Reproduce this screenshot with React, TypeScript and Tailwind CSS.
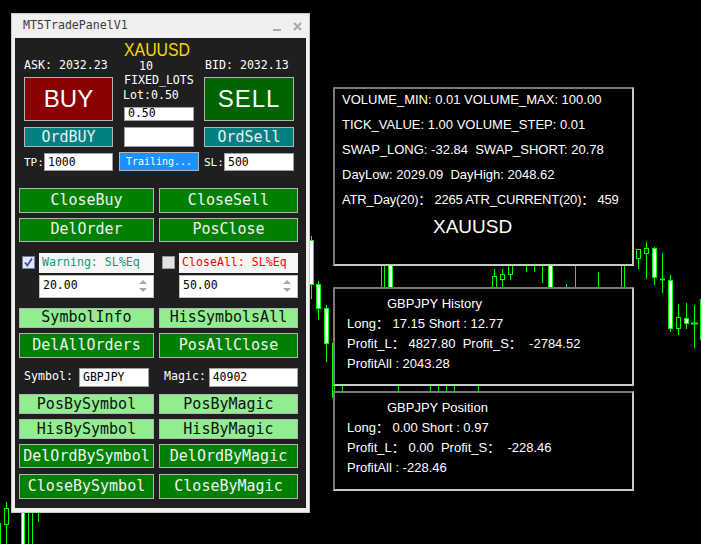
import React from 'react';

const MONO = "font-['DejaVu_Sans_Mono',monospace]";
const SANS = "font-['Liberation_Sans','Noto_Sans_CJK_SC',Arial,sans-serif]";

type Candle = {
  x: number;
  hi: number;
  lo: number;
  l?: number;
  r?: number;
  t?: number;
  b?: number;
  white?: boolean;
  doji?: number;
};

const candles: Candle[] = [
  // next to the panel
  { x: 311, hi: 236, lo: 299, l: 309, r: 313, t: 240, b: 284, white: true },
  { x: 318, hi: 281, lo: 320, l: 316, r: 320, t: 284, b: 308, white: true },
  { x: 326, hi: 305, lo: 362, l: 324, r: 328, t: 308, b: 343, white: true },
  { x: 332, hi: 343, lo: 398 },
  { x: 334, hi: 380, lo: 395 },
  // between box 1 and box 2
  { x: 381, hi: 250, lo: 300 },
  { x: 384, hi: 250, lo: 300 },
  { x: 390, hi: 250, lo: 300, l: 388, r: 392, t: 250, b: 300, white: true },
  { x: 494, hi: 269, lo: 300, l: 492, r: 496, t: 276, b: 300 },
  { x: 502, hi: 269, lo: 300, l: 500, r: 504, t: 274, b: 279 },
  { x: 510, hi: 250, lo: 280, l: 508, r: 512, t: 250, b: 274 },
  { x: 526, hi: 250, lo: 272 },
  { x: 534, hi: 250, lo: 272 },
  { x: 542, hi: 250, lo: 283 },
  { x: 550, hi: 250, lo: 300, l: 548, r: 552, t: 250, b: 300, white: true },
  { x: 566, hi: 284, lo: 300 },
  { x: 575, hi: 250, lo: 300 },
  { x: 598, hi: 272, lo: 300 },
  { x: 621, hi: 250, lo: 300 },
  { x: 624, hi: 250, lo: 300 },
  // between box 2 and box 3
  { x: 342, hi: 375, lo: 400 },
  { x: 398, hi: 375, lo: 400 },
  { x: 430, hi: 375, lo: 400 },
  { x: 438, hi: 375, lo: 400 },
  { x: 446, hi: 375, lo: 400 },
  { x: 454, hi: 375, lo: 400 },
  { x: 478, hi: 375, lo: 400 },
  // right side
  { x: 638, hi: 249, lo: 269, l: 636, r: 640, t: 249, b: 258 },
  { x: 646, hi: 242, lo: 279, l: 644, r: 648, t: 248, b: 253 },
  { x: 654, hi: 247, lo: 285, l: 652, r: 656, t: 248, b: 277, white: true },
  { x: 662, hi: 253, lo: 293, l: 660, r: 664, doji: 279 },
  { x: 670, hi: 275, lo: 332, l: 668, r: 672, t: 280, b: 328, white: true },
  { x: 678, hi: 304, lo: 335, l: 676, r: 680, t: 317, b: 328 },
  { x: 686, hi: 303, lo: 329, l: 684, r: 688, t: 318, b: 323, white: true },
  { x: 694, hi: 305, lo: 348, l: 691, r: 697, doji: 323 },
  { x: 700, hi: 299, lo: 340 },
  // bottom left
  { x: 0, hi: 523, lo: 544 },
  { x: 6, hi: 502, lo: 544, l: 4, r: 8, t: 508, b: 524 },
  { x: 22, hi: 505, lo: 544, l: 21, r: 24, t: 505, b: 544, white: true },
  { x: 28, hi: 505, lo: 544 },
  { x: 32, hi: 505, lo: 544 },
  { x: 38, hi: 505, lo: 522 },
];

function Chart() {
  return (
    <svg className="absolute inset-0" width={701} height={544}>
      {candles.map((c, i) => (
        <g key={i}>
          <line x1={c.x + 0.5} x2={c.x + 0.5} y1={c.hi} y2={c.lo} stroke="#00ff00" />
          {c.t !== undefined && (
            <rect
              x={c.l! + 0.5}
              y={c.t + 0.5}
              width={c.r! - c.l!}
              height={c.b! - c.t}
              fill={c.white ? '#ffffff' : '#000000'}
              stroke="#00ff00"
            />
          )}
          {c.doji !== undefined && (
            <line x1={c.l} x2={c.r! + 1} y1={c.doji + 0.5} y2={c.doji + 0.5} stroke="#00ff00" strokeWidth={2} />
          )}
        </g>
      ))}
    </svg>
  );
}

function Btn({ label, h, light }: { label: string; h: string; light?: boolean }) {
  return (
    <div
      className={`${h} flex items-center justify-center border border-[#b4b4b4] text-[15px] whitespace-nowrap ${
        light ? 'bg-[#90ee90] text-[#111111]' : 'bg-[#008000] text-[#f2f2f2]'
      }`}
    >
      {label}
    </div>
  );
}

function Field({ value, cls }: { value: string; cls: string }) {
  return (
    <div className={`${cls} flex items-center bg-white border border-[#a0a0a0] pl-[3px] text-[11.5px] text-black`}>
      {value}
    </div>
  );
}

function Spin({ value, cls }: { value: string; cls: string }) {
  return (
    <div className={`${cls} mt-[2px] h-[23px] flex items-center justify-between bg-white border border-[#c0c0c0] pl-[3px] pr-[6px] text-[11.5px] text-black`}>
      <span>{value}</span>
      <svg width="8" height="14" viewBox="0 0 8 14">
        <path d="M0 5 L4 1 L8 5 Z" fill="#a8a8a8" />
        <path d="M0 9 L4 13 L8 9 Z" fill="#a8a8a8" />
      </svg>
    </div>
  );
}

function Check({ checked }: { checked?: boolean }) {
  return checked ? (
    <div className="ml-[3px] w-[13px] h-[13px] border border-[#7080a8] bg-[#e4e7f4] flex items-center justify-center">
      <svg width="11" height="11" viewBox="0 0 11 11">
        <path d="M2 5.5 L4.3 8.5 L9 1.5" fill="none" stroke="#3a4ea6" strokeWidth={1.8} />
      </svg>
    </div>
  ) : (
    <div className="ml-[3px] w-[13px] h-[13px] border border-[#9a9a9a] bg-[#e2e2e2]" />
  );
}

function Panel() {
  return (
    <div className={`absolute left-[11px] top-[13px] w-[299px] h-[500px] bg-[#f0f0f0] border border-[#c8c8c8] ${MONO}`}>
      <div className="h-[24px] flex items-center justify-between">
        <span className="pl-[11px] text-[11.6px] text-[#3c3c3c]">MT5TradePanelV1</span>
        <div className="flex items-center gap-[12px] mr-[7px]">
          <div className="w-[8px] h-[2px] bg-[#a8a8a8] mt-[8px]" />
          <svg width="9" height="9" viewBox="0 0 9 9">
            <path d="M1 1 L8 8 M8 1 L1 8" stroke="#a8a8a8" strokeWidth={2} />
          </svg>
        </div>
      </div>

      <div className="mx-[3px] h-[470px] bg-[#1f1f1f] text-white">
        {/* top trading block */}
        <div className="flex pl-[9px]">
          <div className="w-[89px] flex flex-col pt-[21px]">
            <div className="h-[12px] leading-[12px] text-[11.6px] whitespace-nowrap">ASK: 2032.23</div>
            <div className={`mt-[6px] h-[44px] flex items-center justify-center bg-[#8b0000] border border-[#b4b4b4] text-[24px] ${SANS}`}>
              BUY
            </div>
            <div className="mt-[6px] h-[20px] flex items-center justify-center bg-[#008080] border border-[#b4b4b4] text-[15px] text-[#ececec]">
              OrdBUY
            </div>
            <div className="mt-[6px] flex items-center">
              <span className="w-[20px] text-[11px] mt-[2px]">TP:</span>
              <Field value="1000" cls="w-[69px] h-[18px]" />
            </div>
          </div>

          <div className="w-[70px] ml-[11px] flex flex-col pt-[2px]">
            <div className={`h-[20px] leading-[20px] whitespace-nowrap ${SANS}`}>
              <span className="inline-block origin-left scale-x-[0.88] text-[18px] text-[#ffd700]">XAUUSD</span>
            </div>
            <div className="h-[12px] leading-[12px] pl-[15px] text-[11.6px]">10</div>
            <div className="mt-[2px] h-[12px] leading-[12px] text-[11.6px] whitespace-nowrap">FIXED_LOTS</div>
            <div className="mt-[3px] -ml-[1px] h-[12px] leading-[12px] text-[11.6px] whitespace-nowrap">Lot:0.50</div>
            <Field value="0.50" cls="mt-[6px] h-[14px]" />
            <div className="mt-[6px] h-[20px] bg-white border border-[#a0a0a0]" />
            <div className="mt-[5px] -mx-[5px] h-[19px] flex items-center justify-center bg-[#1e90ff] border border-[#b4b4b4] text-[10px] text-white">
              Trailing...
            </div>
          </div>

          <div className="w-[90px] ml-[10px] flex flex-col pt-[21px]">
            <div className="h-[12px] leading-[12px] text-[11.6px] whitespace-nowrap pl-[1px]">BID: 2032.13</div>
            <div className={`mt-[6px] h-[44px] flex items-center justify-center bg-[#006400] border border-[#b4b4b4] text-[24px] tracking-[1px] ${SANS}`}>
              SELL
            </div>
            <div className="mt-[6px] h-[20px] flex items-center justify-center bg-[#008080] border border-[#b4b4b4] text-[15px] text-[#ececec]">
              OrdSell
            </div>
            <div className="mt-[6px] flex items-center">
              <span className="w-[20px] text-[11px] mt-[2px]">SL:</span>
              <Field value="500" cls="w-[70px] h-[18px]" />
            </div>
          </div>
        </div>

        {/* management buttons */}
        <div className="pl-[4px] mt-[16px]">
          <div className="grid grid-cols-[135px_139px] gap-x-[5px] gap-y-[5px]">
            <Btn label="CloseBuy" h="h-[25px]" />
            <Btn label="CloseSell" h="h-[25px]" />
            <Btn label="DelOrder" h="h-[24px]" />
            <Btn label="PosClose" h="h-[24px]" />
          </div>

          <div className="grid grid-cols-[135px_139px] gap-x-[5px] mt-[11px]">
            <div className="flex flex-col">
              <div className="h-[20px] flex items-center">
                <Check checked />
                <div className="ml-[4px] w-[115px] h-[20px] flex items-center pl-[3px] bg-[#f7f7f7] text-[11.6px] text-[#0c9a78] whitespace-nowrap">
                  Warning: SL%Eq
                </div>
              </div>
              <Spin value="20.00" cls="ml-[20px] w-[115px]" />
            </div>
            <div className="flex flex-col">
              <div className="h-[20px] flex items-center">
                <Check />
                <div className="ml-[4px] w-[119px] h-[20px] flex items-center pl-[3px] bg-[#f7f7f7] text-[11.6px] text-[#ff0000] whitespace-nowrap">
                  CloseAll: SL%Eq
                </div>
              </div>
              <Spin value="50.00" cls="ml-[20px] w-[119px]" />
            </div>
          </div>

          <div className="grid grid-cols-[135px_139px] gap-x-[5px] gap-y-[5px] mt-[10px]">
            <Btn label="SymbolInfo" h="h-[20px]" light />
            <Btn label="HisSymbolsAll" h="h-[20px]" light />
            <Btn label="DelAllOrders" h="h-[25px]" />
            <Btn label="PosAllClose" h="h-[25px]" />
          </div>

          <div className="grid grid-cols-[135px_139px] gap-x-[5px] mt-[10px] text-[11.6px]">
            <div className="flex items-center">
              <span className="ml-[5px] w-[55px] mb-[3px]">Symbol:</span>
              <Field value="GBPJPY" cls="w-[70px] h-[19px]" />
            </div>
            <div className="flex items-center">
              <span className="ml-[5px] w-[45px] mb-[3px]">Magic:</span>
              <Field value="40902" cls="w-[90px] h-[19px]" />
            </div>
          </div>

          <div className="grid grid-cols-[135px_139px] gap-x-[5px] mt-[6px]">
            <Btn label="PosBySymbol" h="h-[20px]" light />
            <Btn label="PosByMagic" h="h-[20px]" light />
          </div>
          <div className="grid grid-cols-[135px_139px] gap-x-[5px] mt-[5px]">
            <Btn label="HisBySymbol" h="h-[20px]" light />
            <Btn label="HisByMagic" h="h-[20px]" light />
          </div>
          <div className="grid grid-cols-[135px_139px] gap-x-[5px] mt-[5px]">
            <Btn label="DelOrdBySymbol" h="h-[24px]" />
            <Btn label="DelOrdByMagic" h="h-[24px]" />
          </div>
          <div className="grid grid-cols-[135px_139px] gap-x-[5px] mt-[6px]">
            <Btn label="CloseBySymbol" h="h-[25px]" />
            <Btn label="CloseByMagic" h="h-[25px]" />
          </div>
        </div>
      </div>
    </div>
  );
}

const boxCls =
  'absolute left-[333px] w-[301px] bg-black border-2 border-t-[#7a7a7a] border-l-[#7a7a7a] border-r-[#c8c8c8] border-b-[#c8c8c8] text-white text-[13px] whitespace-pre';

function InfoBoxes() {
  return (
    <div className={SANS}>
      <div className={`${boxCls} top-[87px] h-[179px]`}>
        <div className="pl-[7px] -mt-[2px] leading-[25px]">
          <div>VOLUME_MIN: 0.01 VOLUME_MAX: 100.00</div>
          <div>TICK_VALUE: 1.00 VOLUME_STEP: 0.01</div>
          <div>SWAP_LONG: -32.84  SWAP_SHORT: 20.78</div>
          <div>DayLow: 2029.09  DayHigh: 2048.62</div>
          <div className="tracking-[-0.2px]">ATR_Day(20)： 2265 ATR_CURRENT(20)： 459</div>
          <div className="ml-[91px] h-[30px] leading-[30px] text-[19px]">XAUUSD</div>
        </div>
      </div>

      <div className={`${boxCls} top-[287px] h-[99px]`}>
        <div className="pt-[5px] leading-[20px]">
          <div className="pl-[52px]">GBPJPY History</div>
          <div className="pl-[12px]">Long： 17.15 Short : 12.77</div>
          <div className="pl-[12px]">Profit_L： 4827.80  Profit_S：  -2784.52</div>
          <div className="pl-[12px]">ProfitAll : 2043.28</div>
        </div>
      </div>

      <div className={`${boxCls} top-[391px] h-[100px]`}>
        <div className="pt-[5px] leading-[20px]">
          <div className="pl-[52px]">GBPJPY Position</div>
          <div className="pl-[12px]">Long： 0.00 Short : 0.97</div>
          <div className="pl-[12px]">Profit_L： 0.00  Profit_S：  -228.46</div>
          <div className="pl-[12px]">ProfitAll : -228.46</div>
        </div>
      </div>
    </div>
  );
}

export default function App() {
  return (
    <div className="relative w-[701px] h-[544px] bg-black overflow-hidden">
      <Chart />
      <Panel />
      <InfoBoxes />
    </div>
  );
}
